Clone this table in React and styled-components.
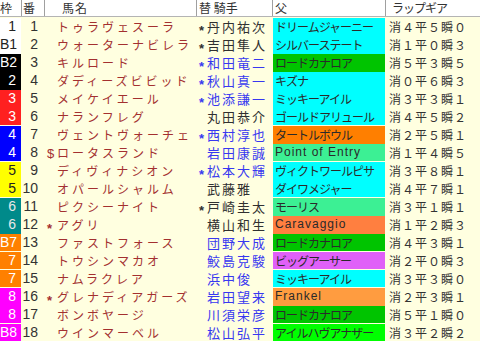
import React from 'react';
import styled, { createGlobalStyle } from 'styled-components';

const GlobalStyle = createGlobalStyle`
  html, body {
    margin: 0;
    padding: 0;
    background: #ffffe0;
  }
  body {
    font-family: "Noto Sans CJK JP", sans-serif;
  }
`;

const COLS = '21px 22px 151px 75px 112px 94px';

const FRAME = {
  1: { bg: '#ffffff', fg: '#222' },
  2: { bg: '#000000', fg: '#fff' },
  3: { bg: '#ff2020', fg: '#fff' },
  4: { bg: '#0000ff', fg: '#fff' },
  5: { bg: '#ffff00', fg: '#222' },
  6: { bg: '#008a8a', fg: '#e8e8e8' },
  7: { bg: '#ff8000', fg: '#fff' },
  8: { bg: '#ff00ff', fg: '#fff' },
};

const SIRE = {
  cyan: '#00ffff',
  green: '#00c400',
  orange: '#ff7f00',
  mint: '#3cf094',
  coral: '#ff7f40',
  apricot: '#ff9c40',
  violet: '#e060f8',
  lime: '#00ff00',
};

const rows = [
  [1, '1', 1, '', 'トゥラヴェスーラ', '*', '丹内祐次', false, 'ドリームジャーニー', 'cyan', '消４平５瞬０'],
  [1, 'B1', 2, '', 'ウォーターナビレラ', '*', '吉田隼人', false, 'シルバーステート', 'cyan', '消１平０瞬３'],
  [2, 'B2', 3, '', 'キルロード', '*', '和田竜二', true, 'ロードカナロア', 'green', '消５平３瞬５'],
  [2, '2', 4, '', 'ダディーズビビッド', '*', '秋山真一', true, 'キズナ', 'cyan', '消０平６瞬３'],
  [3, '3', 5, '', 'メイケイエール', '*', '池添謙一', true, 'ミッキーアイル', 'cyan', '消３平３瞬１'],
  [3, '3', 6, '', 'ナランフレグ', '', '丸田恭介', false, 'ゴールドアリュール', 'cyan', '消４平５瞬２'],
  [4, '4', 7, '', 'ヴェントヴォーチェ', '*', '西村淳也', true, 'タートルボウル', 'orange', '消２平５瞬１'],
  [4, '4', 8, '$', 'ロータスランド', '', '岩田康誠', true, 'Point of Entry', 'mint', '消１平４瞬５'],
  [5, '5', 9, '', 'ディヴィナシオン', '*', '松本大輝', true, 'ヴィクトワールピサ', 'cyan', '消３平８瞬１'],
  [5, '5', 10, '', 'オパールシャルム', '', '武藤雅', false, 'ダイワメジャー', 'cyan', '消４平７瞬１'],
  [6, '6', 11, '', 'ピクシーナイト', '*', '戸崎圭太', false, 'モーリス', 'mint', '消３平１瞬１'],
  [6, '6', 12, '*', 'アグリ', '', '横山和生', false, 'Caravaggio', 'coral', '消１平２瞬３'],
  [7, 'B7', 13, '', 'ファストフォース', '', '団野大成', true, 'ロードカナロア', 'green', '消４平３瞬１'],
  [7, '7', 14, '', 'トウシンマカオ', '', '鮫島克駿', true, 'ビッグアーサー', 'violet', '消２平０瞬３'],
  [7, '7', 15, '', 'ナムラクレア', '', '浜中俊', true, 'ミッキーアイル', 'cyan', '消３平３瞬０'],
  [8, '8', 16, '*', 'グレナディアガーズ', '', '岩田望来', true, 'Frankel', 'apricot', '消２平３瞬１'],
  [8, '8', 17, '', 'ボンボヤージ', '', '川須栄彦', true, 'ロードカナロア', 'green', '消５平１瞬０'],
  [8, 'B8', 18, '', 'ウインマーベル', '', '松山弘平', true, 'アイルハヴアナザー', 'lime', '消３平２瞬２'],
];

const Page = styled.div`
  width: 480px;
  height: 341px;
  overflow: hidden;
  background: #ffffe0;
`;

const Header = styled.div`
  display: grid;
  grid-template-columns: ${COLS};
  column-gap: 1px;
  height: 16px;
  background: #a0a0a0;
  border-bottom: 1px solid #b4b4b4;
`;

const HeadCell = styled.div`
  background: #ffffff;
  color: #333;
  font-size: 12px;
  line-height: 16px;
  white-space: nowrap;
  padding-left: ${p => p.$pad || 0}px;
  letter-spacing: ${p => p.$ls || 0}px;
`;

const Body = styled.div`
  display: flex;
  flex-direction: column;
  gap: 1px;
  padding-top: 1px;
`;

const Row = styled.div`
  display: grid;
  grid-template-columns: ${COLS};
  column-gap: 1px;
  height: 17px;
`;

const FrameCell = styled.div`
  background: ${p => p.$bg};
  color: ${p => p.$fg};
  font-family: "Liberation Sans", sans-serif;
  font-size: 14px;
  line-height: 17px;
  text-align: right;
  padding-right: 5px;
`;

const NumCell = styled.div`
  color: #333;
  font-family: "Liberation Sans", sans-serif;
  font-size: 14px;
  line-height: 17px;
  text-align: right;
  padding-right: 6px;
`;

const NameCell = styled.div`
  color: #a33030;
  font-size: 12px;
  line-height: 17px;
  letter-spacing: 3px;
  padding-left: 2px;
  white-space: nowrap;
`;

const Mark = styled.span`
  display: inline-block;
  width: ${p => p.$w}px;
  letter-spacing: 0;
  font-family: "Liberation Sans", sans-serif;
  font-size: 13px;
  font-weight: ${p => (p.$plain ? 'normal' : 'bold')};
  vertical-align: ${p => (p.$plain ? 'baseline' : '-3px')};
  line-height: 1;
`;

const JockeyCell = styled.div`
  color: ${p => (p.$blue ? '#3838f0' : '#303030')};
  font-size: 13px;
  line-height: 17px;
  letter-spacing: 2px;
  padding-left: 2px;
  white-space: nowrap;
`;

const SireCell = styled.div`
  background: ${p => p.$bg};
  color: #2a2a2a;
  font-family: ${p => (p.$latin ? '"Liberation Sans", sans-serif' : '"Noto Sans CJK JP", sans-serif')};
  font-size: 12px;
  line-height: 17px;
  letter-spacing: ${p => (p.$latin ? '1px' : '-1px')};
  padding-left: 2px;
  white-space: nowrap;
`;

const LapCell = styled.div`
  color: #333;
  font-size: 12px;
  line-height: 17px;
  letter-spacing: 1px;
  padding-left: 3px;
  white-space: nowrap;
`;

export default function App() {
  return (
    <Page>
      <GlobalStyle />
      <Header>
        <HeadCell>枠</HeadCell>
        <HeadCell $pad={1}>番</HeadCell>
        <HeadCell $pad={17} $ls={1}>馬名</HeadCell>
        <HeadCell $pad={2}>替 騎手</HeadCell>
        <HeadCell $pad={2}>父</HeadCell>
        <HeadCell $pad={6} $ls={-1}>ラップギア</HeadCell>
      </Header>
      <Body>
        {rows.map(([frame, label, num, pre, name, jpre, jockey, blue, sire, sc, lap]) => (
          <Row key={num}>
            <FrameCell $bg={FRAME[frame].bg} $fg={FRAME[frame].fg}>{label}</FrameCell>
            <NumCell>{num}</NumCell>
            <NameCell>
              <Mark $w={10} $plain={pre === '$'}>{pre}</Mark>
              {name}
            </NameCell>
            <JockeyCell $blue={blue}>
              <Mark $w={8}>{jpre}</Mark>
              {jockey}
            </JockeyCell>
            <SireCell $bg={SIRE[sc]} $latin={/^[A-Za-z ]+$/.test(sire)}>{sire}</SireCell>
            <LapCell>{lap}</LapCell>
          </Row>
        ))}
      </Body>
    </Page>
  );
}
